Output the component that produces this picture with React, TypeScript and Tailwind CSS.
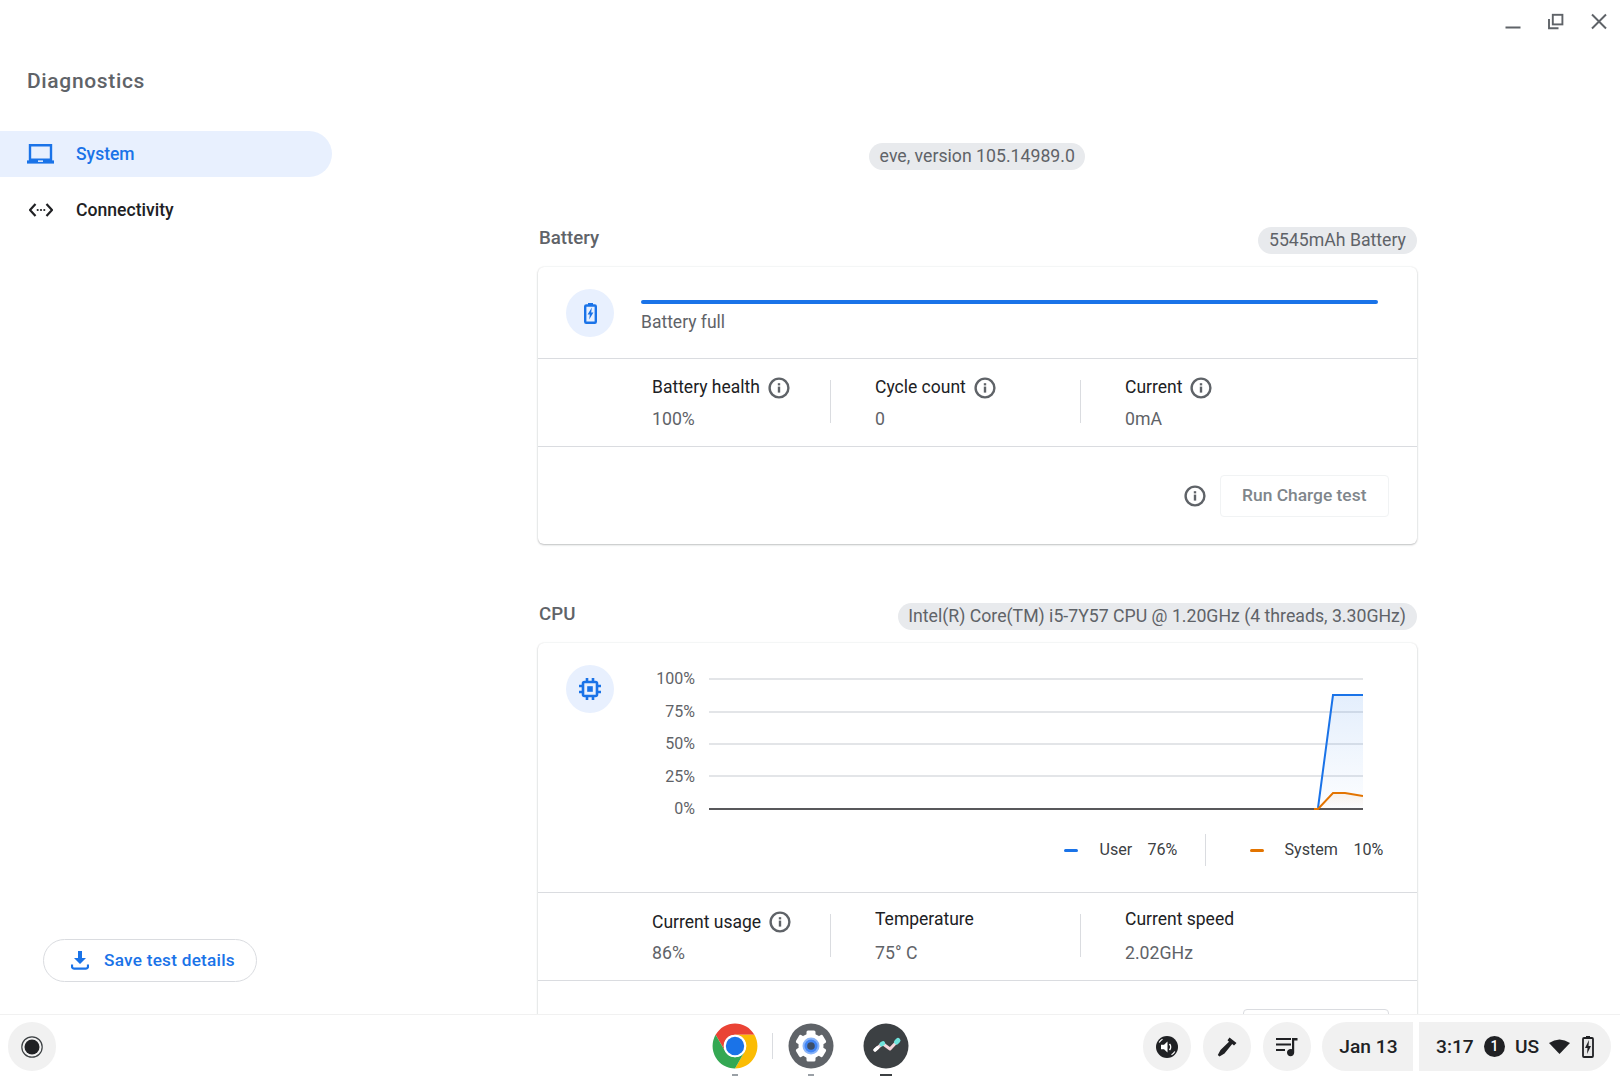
import React from "react";

const BLUE = "#1a73e8";

function Info() {
  return (
    <svg width="22" height="22" viewBox="0 0 22 22" className="shrink-0">
      <circle cx="11" cy="11" r="9.4" fill="none" stroke="#5f6368" strokeWidth="2.4" />
      <rect x="9.8" y="9.6" width="2.4" height="6" fill="#5f6368" />
      <rect x="9.8" y="6.2" width="2.4" height="2.2" fill="#5f6368" />
    </svg>
  );
}

type Item = { label: string; value: string; info?: boolean; up?: boolean };

function StatsRow({ items, valueGap }: { items: Item[]; valueGap: string }) {
  return (
    <div className="flex items-start h-[69px] pl-[114px]">
      {items.map((it, i) => (
        <React.Fragment key={it.label}>
          {i > 0 && <div className="w-px h-[43px] bg-[#dadce0] mt-[3px] mr-[44px] shrink-0" />}
          <div className={`flex flex-col shrink-0 ${i === 0 ? "w-[178px]" : i === 1 ? "w-[205px]" : "w-[200px]"}`}>
            <div className={`flex items-center gap-[8px] h-[22px] text-[17.5px] text-[#202124] ${it.up ? "-mt-[3px]" : ""}`}>
              <span>{it.label}</span>
              {it.info && <Info />}
            </div>
            <div className={`text-[17.7px] text-[#5f6368] leading-[22px] ${it.up ? "mt-[12px]" : valueGap}`}>{it.value}</div>
          </div>
        </React.Fragment>
      ))}
    </div>
  );
}

function Chip({ children }: { children: React.ReactNode }) {
  return (
    <div className="h-[27px] rounded-full bg-[#e8eaed] px-[10.5px] flex items-center text-[17.7px] text-[#5f6368] whitespace-nowrap">
      {children}
    </div>
  );
}

function SectionHeader({ title, chip, top }: { title: string; chip: string; top: string }) {
  return (
    <div className={`flex items-start justify-between ${top}`}>
      <div className="text-[18.7px] font-medium text-[#5f6368] leading-[22px] pl-[1px]">{title}</div>
      <Chip>{chip}</Chip>
    </div>
  );
}

function IconCircle({ children }: { children: React.ReactNode }) {
  return <div className="w-[48px] h-[48px] rounded-full bg-[#e8f0fe] flex items-center justify-center shrink-0">{children}</div>;
}

function CpuChart() {
  return (
    <svg width="654" height="163" viewBox="0 0 654 163" className="shrink-0">
      <defs>
        <linearGradient id="uf" x1="0" y1="0" x2="0" y2="1">
          <stop offset="0" stopColor="#1a73e8" stopOpacity="0.12" />
          <stop offset="1" stopColor="#1a73e8" stopOpacity="0.01" />
        </linearGradient>
        <linearGradient id="of" x1="0" y1="0" x2="0" y2="1">
          <stop offset="0" stopColor="#e37400" stopOpacity="0.08" />
          <stop offset="1" stopColor="#e37400" stopOpacity="0" />
        </linearGradient>
      </defs>
      {[16, 49, 81, 113].map((y) => (
        <line key={y} x1="0" x2="654" y1={y} y2={y} stroke="#dadce0" strokeWidth="1.3" />
      ))}
      <path d="M609 145 L624 32 H654 V146 H609 Z" fill="url(#uf)" />
      <path d="M609 145 L624 130 H636 L654 133 V146 H609 Z" fill="url(#of)" />
      <line x1="0" x2="654" y1="146" y2="146" stroke="#202124" strokeWidth="1.3" />
      <path d="M609 145 L624 32 H654" fill="none" stroke={BLUE} strokeWidth="2" />
      <path d="M605 146 H609 L624 130 H636 L654 133" fill="none" stroke="#e37400" strokeWidth="2" />
    </svg>
  );
}

function Legend() {
  return (
    <div className="flex items-center justify-end h-[32px] pr-[34px] mt-[8px] text-[16.1px] text-[#3c4043]">
      <span className="w-[14px] h-[3px] rounded-full bg-[#1a73e8]" />
      <span className="ml-[22px] w-[48px]">User</span>
      <span className="w-[57px]">76%</span>
      <span className="w-px h-[32px] bg-[#dadce0]" />
      <span className="w-[14px] h-[3px] rounded-full bg-[#e37400] ml-[44px]" />
      <span className="ml-[21px] w-[69px]">System</span>
      <span className="w-[29px] whitespace-nowrap">10%</span>
    </div>
  );
}

function Chrome() {
  return (
    <svg width="46" height="46" viewBox="1.5 1.5 45 45">
      <path d="M5 13A22 22 0 0 1 43 13H24A11 11 0 0 0 14.5 29.5Z" fill="#ea4335" />
      <path d="M43 13A22 22 0 0 1 24 46L33.5 29.5A11 11 0 0 0 24 13Z" fill="#fbbc04" />
      <path d="M24 46A22 22 0 0 1 5 13L14.5 29.5A11 11 0 0 0 33.5 29.5Z" fill="#34a853" />
      <circle cx="24" cy="24" r="11" fill="#fff" />
      <circle cx="24" cy="24" r="9" fill="#1a73e8" />
    </svg>
  );
}

function Gear() {
  return (
    <svg width="46" height="46" viewBox="0 0 46 46">
      <circle cx="23" cy="23" r="22.5" fill="#5f6368" />
      <g fill="#fff">
        <circle cx="23" cy="23" r="12.5" />
        {[0, 60, 120, 180, 240, 300].map((a) => (
          <rect key={a} x="18.5" y="7.5" width="9" height="7" rx="1.5" transform={`rotate(${a} 23 23)`} />
        ))}
      </g>
      <circle cx="23" cy="23" r="8.5" fill="#8ab4f8" />
      <circle cx="23" cy="23" r="6.5" fill="#4285f4" />
      <circle cx="23" cy="23" r="3.8" fill="#3c4043" opacity="0.8" />
    </svg>
  );
}

function DiagApp() {
  return (
    <svg width="46" height="46" viewBox="0 0 46 46">
      <circle cx="23" cy="23" r="22.5" fill="#3c4043" />
      <path d="M12 27 L19.5 20.5 L27 26 L35 17.5" fill="none" stroke="#f6d5dc" strokeWidth="3" strokeLinecap="round" strokeLinejoin="round" />
      <path d="M12 27 L14.5 24.8" stroke="#fff" strokeWidth="3.4" strokeLinecap="round" />
      <path d="M18.5 21.3 L20 20.2" stroke="#6fe3dc" strokeWidth="4.4" strokeLinecap="round" />
      <path d="M33.5 19 L35 17.5" stroke="#6fe3dc" strokeWidth="5" strokeLinecap="round" />
    </svg>
  );
}

function RoundBtn({ children, cls }: { children: React.ReactNode; cls?: string }) {
  return <div className={`w-[48px] h-[49px] rounded-full bg-[#f1f1f1] flex items-center justify-center shrink-0 ${cls ?? ""}`}>{children}</div>;
}

export default function App() {
  return (
    <div className="w-[1620px] h-[1080px] flex flex-col bg-white overflow-hidden font-['Roboto',sans-serif]">
      <div className="h-[44px] flex items-start justify-end shrink-0">
        <svg width="16" height="30" viewBox="0 0 16 30" className="mr-[27.5px]">
          <rect x="0.5" y="26.5" width="15" height="2" fill="#5f6368" />
        </svg>
        <svg width="16" height="30" viewBox="0 0 16 30" className="mr-[27px]">
          <path d="M1 19V28.2H10.5" fill="none" stroke="#5f6368" strokeWidth="1.9" />
          <rect x="4.8" y="14.8" width="9.6" height="9.6" fill="#fff" stroke="#5f6368" strokeWidth="1.9" />
        </svg>
        <svg width="16" height="30" viewBox="0 0 16 30" className="mr-[13px]">
          <path d="M1 14.5 L15 28.5 M15 14.5 L1 28.5" stroke="#5f6368" strokeWidth="2" />
        </svg>
      </div>

      <div className="flex-1 flex min-h-0 overflow-hidden">
        <aside className="w-[538px] shrink-0 flex flex-col">
          <div className="pl-[27px] pt-[25px] text-[21px] leading-[24px] font-medium tracking-[0.65px] text-[#5f6368]">Diagnostics</div>
          <div className="mt-[38px] w-[331.5px] h-[46px] rounded-r-full bg-[#e8f0fe] flex items-center pl-[27px]">
            <svg width="27" height="20" viewBox="0 0 27 20" className="shrink-0">
              <path d="M3 1.2H24V15.8H3Z" fill="none" stroke={BLUE} strokeWidth="2.4" />
              <path d="M0 16.4H27V19.6H0Z" fill={BLUE} />
              <rect x="11" y="16.4" width="5" height="1.5" fill="#e8f0fe" />
            </svg>
            <span className="ml-[22px] text-[17.5px] font-medium text-[#1a73e8]">System</span>
          </div>
          <div className="mt-[10px] h-[46px] flex items-center pl-[28.5px]">
            <svg width="24" height="14" viewBox="0 0 24 14" className="shrink-0">
              <path d="M6.5 1 L1 7 L6.5 13 M17.5 1 L23 7 L17.5 13" fill="none" stroke="#202124" strokeWidth="2.2" />
              <circle cx="8.7" cy="7" r="1.1" fill="#202124" />
              <circle cx="12" cy="7" r="1.1" fill="#202124" />
              <circle cx="15.3" cy="7" r="1.1" fill="#202124" />
            </svg>
            <span className="ml-[23.5px] text-[17.6px] font-medium text-[#202124]">Connectivity</span>
          </div>
          <div className="mt-auto mb-[32px] ml-[43px] w-[214px] h-[43px] rounded-full border border-[#dadce0] flex items-center pl-[27px]">
            <svg width="18" height="19" viewBox="0 0 18 19" className="shrink-0">
              <path d="M7 0H11V7H15L9 13L3 7H7Z" fill={BLUE} />
              <path d="M1 13.5V15.5C1 16.8 1.8 17.6 3 17.6H15C16.2 17.6 17 16.8 17 15.5V13.5" fill="none" stroke={BLUE} strokeWidth="2.2" />
            </svg>
            <span className="ml-[15px] text-[17.2px] font-medium tracking-[0.25px] text-[#1a73e8] whitespace-nowrap">Save test details</span>
          </div>
        </aside>

        <main className="w-[878.5px] shrink-0 flex flex-col">
          <div className="flex justify-center pt-[99px]">
            <Chip>eve, version 105.14989.0</Chip>
          </div>

          <SectionHeader title="Battery" chip="5545mAh Battery" top="mt-[57px]" />
          <section className="mt-[13px] h-[277px] shrink-0 rounded-[6px] bg-white shadow-[0_1px_2px_rgba(60,64,67,0.3),0_0_2px_rgba(60,64,67,0.12)] flex flex-col">
            <div className="h-[91.5px] flex items-start pl-[28px] pt-[22px] border-b border-[#dadce0] shrink-0">
              <IconCircle>
                <svg width="13" height="21" viewBox="0 0 13 21">
                  <rect x="4" y="0" width="5" height="2.5" fill={BLUE} />
                  <rect x="1.2" y="2.5" width="10.6" height="17.3" rx="1" fill="none" stroke={BLUE} strokeWidth="2.4" />
                  <path d="M7.8 4.5 L3.6 11.5 H5.8 L5.2 16.5 L9.4 9.5 H7.2Z" fill={BLUE} />
                </svg>
              </IconCircle>
              <div className="ml-[27px] flex-1 pr-[39px]">
                <div className="h-[4.5px] mt-[10.5px] rounded-full bg-[#1a73e8]" />
                <div className="mt-[7px] text-[17.5px] leading-[22px] text-[#5f6368]">Battery full</div>
              </div>
            </div>
            <div className="border-b border-[#dadce0] shrink-0 pt-[18px]">
              <StatsRow
                valueGap="mt-[9px]"
                items={[
                  { label: "Battery health", value: "100%", info: true },
                  { label: "Cycle count", value: "0", info: true },
                  { label: "Current", value: "0mA", info: true },
                ]}
              />
            </div>
            <div className="flex-1 flex items-start justify-end pr-[28px] pt-[28px]">
              <div className="mt-[10px] mr-[14px]"><Info /></div>
              <div className="w-[168.5px] h-[42px] rounded-[4px] border border-[#f1f3f4] flex items-center justify-center text-[17.4px] font-medium text-[#80868b]">Run Charge test</div>
            </div>
          </section>

          <SectionHeader title="CPU" chip="Intel(R) Core(TM) i5-7Y57 CPU @ 1.20GHz (4 threads, 3.30GHz)" top="mt-[59px]" />
          <section className="mt-[13px] flex-1 rounded-t-[6px] bg-white shadow-[0_1px_2px_rgba(60,64,67,0.3),0_0_2px_rgba(60,64,67,0.12)] flex flex-col">
            <div className="h-[250px] pt-[20px] border-b border-[#dadce0] shrink-0">
              <div className="flex items-start pl-[28px]">
                <div className="mt-[2px]">
                  <IconCircle>
                    <svg width="24" height="24" viewBox="0 0 24 24">
                      <rect x="5" y="5" width="14" height="14" rx="1.5" fill="none" stroke={BLUE} strokeWidth="2.6" />
                      <rect x="9.2" y="9.2" width="5.6" height="5.6" fill={BLUE} />
                      <path d="M9 1V4M15 1V4M9 20V23M15 20V23M1 9H4M1 15H4M20 9H23M20 15H23" stroke={BLUE} strokeWidth="2.6" />
                    </svg>
                  </IconCircle>
                </div>
                <div className="w-[81px] shrink-0 flex flex-col text-[16px] text-[#5f6368]">
                  {["100%", "75%", "50%", "25%", "0%"].map((t) => (
                    <div key={t} className="h-[32.5px] flex items-center justify-end">{t}</div>
                  ))}
                </div>
                <div className="ml-[14px]"><CpuChart /></div>
              </div>
              <Legend />
            </div>
            <div className="border-b border-[#dadce0] shrink-0 pt-[18px]">
              <StatsRow
                valueGap="mt-[9px]"
                items={[
                  { label: "Current usage", value: "86%", info: true },
                  { label: "Temperature", value: "75° C", up: true },
                  { label: "Current speed", value: "2.02GHz", up: true },
                ]}
              />
            </div>
            <div className="flex-1 flex items-start justify-end pr-[28px] pt-[28px]">
              <div className="w-[146px] h-[42px] rounded-[4px] border border-[#dadce0]" />
            </div>
          </section>
        </main>
      </div>

      <footer className="h-[66px] shrink-0 bg-white border-t border-[#f1f1f1] relative flex items-start pt-[7px] pl-[8px]">
        <RoundBtn>
          <svg width="22" height="22" viewBox="0 0 22 22">
            <circle cx="11" cy="11" r="10.2" fill="none" stroke="#3c4043" strokeWidth="1.2" />
            <circle cx="11" cy="11" r="7.5" fill="#202124" />
          </svg>
        </RoundBtn>

        <div className="ml-[656px] flex items-start">
          <div className="flex flex-col items-center mt-[1px]">
            <Chrome />
            <div className="w-[6px] h-[2px] mt-[5px] bg-[#9aa0a6]" />
          </div>
          <div className="w-px h-[26px] bg-[#dadce0] mt-[11px] ml-[14px] mr-[15px]" />
          <div className="flex flex-col items-center mt-[1px]">
            <Gear />
            <div className="w-[6px] h-[2px] mt-[5px] bg-[#9aa0a6]" />
          </div>
          <div className="flex flex-col items-center mt-[1px] ml-[29px]">
            <DiagApp />
            <div className="w-[12px] h-[2px] mt-[5px] bg-[#3c4043]" />
          </div>
        </div>

        <div className="ml-auto flex items-start pr-[9px]">
          <RoundBtn>
            <svg width="22" height="22" viewBox="0 0 22 22">
              <circle cx="11" cy="11" r="11" fill="#202124" />
              <path d="M5 8.7H8L11.5 5.5V16.5L8 13.3H5Z" fill="#fff" />
              <path d="M13.5 8C15 9.6 15 12.4 13.5 14" fill="none" stroke="#fff" strokeWidth="1.5" />
              <path d="M3.2 6.5A9 9 0 0 1 6.5 3.2M18.8 15.5A9 9 0 0 1 15.5 18.8" fill="none" stroke="#fff" strokeWidth="1.2" />
            </svg>
          </RoundBtn>
          <RoundBtn cls="ml-[12px]">
            <svg width="22" height="22" viewBox="0 0 22 22">
              <path d="M13.5 1.5 L20.5 7 L18 9.5 L16.2 8 L8.5 17.5 L3.5 20.5 L1.8 19 L4.5 14 L13 5.8 L11.5 4.2Z" fill="#202124" />
            </svg>
          </RoundBtn>
          <RoundBtn cls="ml-[12px]">
            <svg width="22" height="20" viewBox="0 0 22 20">
              <path d="M0 2H15M0 7.5H15M0 13H9" stroke="#202124" strokeWidth="2" />
              <path d="M16 1H21.5V3.4H18.2V15.5C18.2 17.7 16.5 19.2 14.6 19.2C12.7 19.2 11 17.7 11 15.5C11 13.5 12.7 12 14.6 12C15.2 12 15.6 12.1 16 12.3Z" fill="#202124" />
            </svg>
          </RoundBtn>
          <div className="ml-[11px] w-[91px] h-[49px] pl-[2px] pt-[1px] rounded-l-full rounded-r-[6px] bg-[#f1f1f1] flex items-center justify-center text-[19.2px] font-medium text-[#202124]">Jan 13</div>
          <div className="ml-[6px] w-[192px] h-[49px] rounded-r-full rounded-l-[6px] bg-[#f1f1f1] flex items-center pl-[17px] text-[19.2px] font-medium text-[#202124]">
            <span className="w-[37px] mt-[1px]">3:17</span>
            <span className="ml-[11px] w-[21px] h-[21px] rounded-full bg-[#202124] text-white text-[14px] flex items-center justify-center">1</span>
            <span className="ml-[10px] w-[24px] mt-[1px]">US</span>
            <svg width="21" height="15" viewBox="0 0 21 15" className="ml-[10px]">
              <path d="M10.5 15 L0 4 Q10.5 -3 21 4Z" fill="#202124" />
            </svg>
            <svg width="12" height="22" viewBox="0 0 12 22" className="ml-[12px]">
              <rect x="4" y="0" width="4" height="2" fill="#202124" />
              <rect x="1" y="2" width="10" height="19" rx="1" fill="#e8e8e8" stroke="#202124" strokeWidth="1.8" />
              <path d="M7 4 L3 12 H5.5 L5 18 L9 10 H6.5Z" fill="#202124" />
            </svg>
          </div>
        </div>
      </footer>
    </div>
  );
}
